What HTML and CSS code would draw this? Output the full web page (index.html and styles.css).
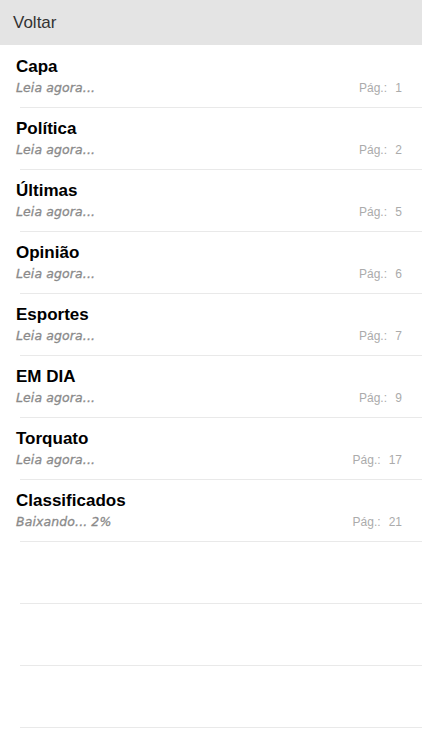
FILE: index.html
```html
<!DOCTYPE html>
<html lang="pt-BR">
<head>
    <meta charset="UTF-8">
    <meta name="viewport" content="width=device-width, initial-scale=1.0">
    <title>Edições</title>
    <link rel="stylesheet" href="styles.css">
</head>
<body>
    <div class="topbar">
        <button class="back-btn">Voltar</button>
    </div>
    <ul class="sections">
        <li class="section">
            <div class="section-text">
                <div class="section-title">Capa</div>
                <div class="section-status">Leia agora...</div>
            </div>
            <div class="section-page"><span>Pág.:</span><span class="page-num">1</span></div>
        </li>
        <li class="section">
            <div class="section-text">
                <div class="section-title">Política</div>
                <div class="section-status">Leia agora...</div>
            </div>
            <div class="section-page"><span>Pág.:</span><span class="page-num">2</span></div>
        </li>
        <li class="section">
            <div class="section-text">
                <div class="section-title">Últimas</div>
                <div class="section-status">Leia agora...</div>
            </div>
            <div class="section-page"><span>Pág.:</span><span class="page-num">5</span></div>
        </li>
        <li class="section">
            <div class="section-text">
                <div class="section-title">Opinião</div>
                <div class="section-status">Leia agora...</div>
            </div>
            <div class="section-page"><span>Pág.:</span><span class="page-num">6</span></div>
        </li>
        <li class="section">
            <div class="section-text">
                <div class="section-title">Esportes</div>
                <div class="section-status">Leia agora...</div>
            </div>
            <div class="section-page"><span>Pág.:</span><span class="page-num">7</span></div>
        </li>
        <li class="section">
            <div class="section-text">
                <div class="section-title">EM DIA</div>
                <div class="section-status">Leia agora...</div>
            </div>
            <div class="section-page"><span>Pág.:</span><span class="page-num">9</span></div>
        </li>
        <li class="section">
            <div class="section-text">
                <div class="section-title">Torquato</div>
                <div class="section-status">Leia agora...</div>
            </div>
            <div class="section-page"><span>Pág.:</span><span class="page-num">17</span></div>
        </li>
        <li class="section">
            <div class="section-text">
                <div class="section-title">Classificados</div>
                <div class="section-status">Baixando... 2%</div>
            </div>
            <div class="section-page"><span>Pág.:</span><span class="page-num">21</span></div>
        </li>
        <li class="section empty"></li>
        <li class="section empty"></li>
        <li class="section empty"></li>
    </ul>
</body>
</html>
```

FILE: styles.css
```css
body {
    margin: 0;
    font-family: "Liberation Sans", Arial, sans-serif;
    background-color: #fff;
    height: 750px;
    overflow: hidden;
}
.topbar {
    height: 45px;
    background-color: #e4e4e4;
    display: flex;
    align-items: center;
}
.back-btn {
    background: none;
    border: none;
    padding: 0 0 0 13px;
    font-family: inherit;
    font-size: 17px;
    color: #333;
    cursor: pointer;
}
.sections {
    list-style: none;
    margin: 0;
    padding: 1px 0 0;
}
.section {
    height: 62px;
    box-sizing: border-box;
    display: flex;
    align-items: flex-start;
    padding: 11px 20px 0 16px;
    background: linear-gradient(#e9e9e9, #e9e9e9) no-repeat 20px 100% / calc(100% - 20px) 1px;
}
.section-text {
    flex: 1;
}
.section-title {
    font-size: 17px;
    font-weight: bold;
    color: #000;
    line-height: 20px;
}
.section-status {
    margin-top: 3px;
    font-family: "DejaVu Sans", sans-serif;
    font-style: italic;
    font-size: 12.5px;
    color: #8a8a8a;
    -webkit-text-stroke: 0.3px #8a8a8a;
    letter-spacing: 0.1px;
    line-height: 16px;
}
.section-page {
    margin-top: 23px;
    font-size: 12px;
    color: #ababab;
    line-height: 16px;
    display: flex;
    gap: 8px;
}
.page-num {
    min-width: 7px;
    text-align: right;
}
```
